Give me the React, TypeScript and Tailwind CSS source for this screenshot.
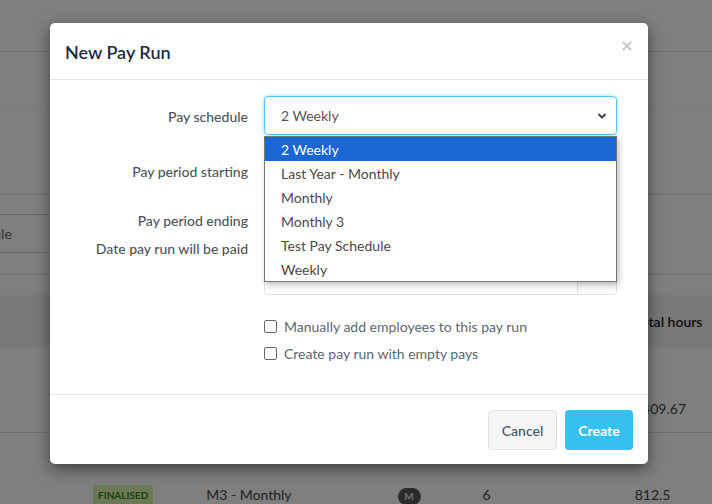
import React from 'react'

const schedules = ['2 Weekly', 'Last Year - Monthly', 'Monthly', 'Monthly 3', 'Test Pay Schedule', 'Weekly']

function PageBehind() {
  return (
    <div className="h-[504px] w-[712px] overflow-hidden bg-white text-[14px] text-[#555] font-['Lato',sans-serif]">
      <div className="h-[52px] border-b border-[#dcdcdc]" />
      <div className="h-[58px] border-b border-[#f0f0f0]" />
      <div className="h-[85px] border-b border-[#dcdcdc]" />
      <div className="h-[80px] border-b border-[#dcdcdc] pt-[19px]">
        <div className="flex h-[39px] w-[200px] items-center border-y border-[#d4d4d4]">
          <span className="ml-[-44px] text-[#666]">Schedule</span>
        </div>
      </div>
      <div className="h-[20px]" />
      <div className="flex h-[52px] items-center bg-[#eef1f4] pl-[634px] font-semibold text-[#222]">Total hours</div>
      <div className="h-[86px] border-b border-[#dcdcdc] pl-[634px] pt-[51px] text-[#444]">1409.67</div>
      <div className="flex h-[73px] items-end text-[#444]">
        <span className="ml-[93px] rounded-[3px] bg-[#d6f2a8] px-[5px] py-[3px] text-[10px] font-bold text-[#3d7d12]">FINALISED</span>
        <span className="ml-[53px] mb-[1px]">M3 - Monthly</span>
        <span className="ml-[106px] mb-[1px] flex h-[17px] w-[23px] items-center justify-center rounded-full bg-[#555] text-[10px] font-bold text-[#ddd]">M</span>
        <span className="ml-[62px] mb-[1px]">6</span>
        <span className="ml-[144px] mb-[1px]">812.5</span>
      </div>
    </div>
  )
}

function Checkbox({ label }: { label: string }) {
  return (
    <label className="flex h-[20px] items-center">
      <span className="h-[13px] w-[13px] rounded-[2px] border border-[#666] bg-white" />
      <span className="ml-[7px] text-[14px] text-[#5d6770]">{label}</span>
    </label>
  )
}

export default function App() {
  return (
    <div className="relative h-[504px] w-[712px] overflow-hidden font-['Lato',sans-serif]">
      <PageBehind />
      <div className="absolute inset-0 bg-black/50" />

      {/* dialog */}
      <div className="absolute left-[50px] top-[23px] w-[598px] rounded-[5px] bg-white shadow-[0_5px_15px_rgba(0,0,0,0.5)]">
        <div className="flex h-[57px] items-center justify-between border-b border-[#e5e5e5] pl-[15px] pr-[16px]">
          <h2 className="mt-[2px] text-[18px] font-semibold text-[#1f2d3d]">New Pay Run</h2>
          <svg width="10" height="10" viewBox="0 0 10 10" className="mb-[10px]">
            <path d="M1 1L9 9M9 1L1 9" stroke="#c6c6c6" strokeWidth="1.8" />
          </svg>
        </div>

        <div className="pb-[31px] pt-[16px] text-[14px]">
          {/* pay schedule */}
          <div className="flex h-[39px] items-center">
            <span className="mt-[2px] w-[198px] text-right font-medium text-[#4b5661]">Pay schedule</span>
            <div className="relative ml-[16px] w-[353px]">
              <div className="flex h-[39px] items-center justify-between rounded-[4px] border border-[#4cc6f4] pl-[16px] pr-[9px] text-[#555] shadow-[0_0_4px_rgba(76,198,244,0.6)]">
                <span>2 Weekly</span>
                <svg width="10" height="8" viewBox="0 0 10 8">
                  <path d="M1.5 2L5 5.5L8.5 2" fill="none" stroke="#444" strokeWidth="2" />
                </svg>
              </div>
              <ul className="absolute left-0 top-[40px] z-10 w-[353px] border border-[#767676] bg-white shadow-[2px_3px_6px_rgba(0,0,0,0.25)]">
                {schedules.map((s, i) => (
                  <li
                    key={s}
                    className={
                      i === 0
                        ? 'flex h-[24px] items-center bg-[#1a66d2] pl-[16px] text-white'
                        : 'flex h-[24px] items-center pl-[16px] text-[#4f4744]'
                    }
                  >
                    {s}
                  </li>
                ))}
              </ul>
            </div>
          </div>

          <div className="mt-[17px] flex h-[39px] items-center">
            <span className="w-[198px] text-right font-medium text-[#4b5661]">Pay period starting</span>
            <div className="ml-[16px] h-[39px] w-[353px] rounded-[4px] border border-[#dde2e6]" />
          </div>

          <div className="mt-[10px] flex h-[39px] items-center">
            <span className="w-[198px] text-right font-medium text-[#4b5661]">Pay period ending</span>
            <div className="ml-[16px] h-[39px] w-[353px] rounded-[4px] border border-[#dde2e6]" />
          </div>

          <div className="mt-[-1px] flex items-start">
            <span className="w-[198px] text-right font-medium leading-[20px] text-[#4b5661]">Date pay run will be paid</span>
            <div className="ml-[16px] mt-[17px] flex h-[39px] w-[353px] rounded-[4px] border border-[#dde2e6]">
              <div className="flex-1" />
              <div className="w-[39px] border-l border-[#dde2e6] bg-[#fafbfc]" />
            </div>
          </div>

          <div className="ml-[214px] mt-[21px] flex flex-col gap-[7px]">
            <Checkbox label="Manually add employees to this pay run" />
            <Checkbox label="Create pay run with empty pays" />
          </div>
        </div>

        <div className="flex justify-end gap-[8px] border-t border-[#e5e5e5] pb-[14px] pr-[15px] pt-[15px]">
          <button className="h-[40px] w-[69px] rounded-[4px] border border-[#dfe3e7] bg-[#f3f5f7] text-[14px] font-medium text-[#4b5661]">
            Cancel
          </button>
          <button className="h-[40px] w-[68px] rounded-[4px] bg-[#35c1ef] text-[14px] font-bold text-white">
            Create
          </button>
        </div>
      </div>
    </div>
  )
}
